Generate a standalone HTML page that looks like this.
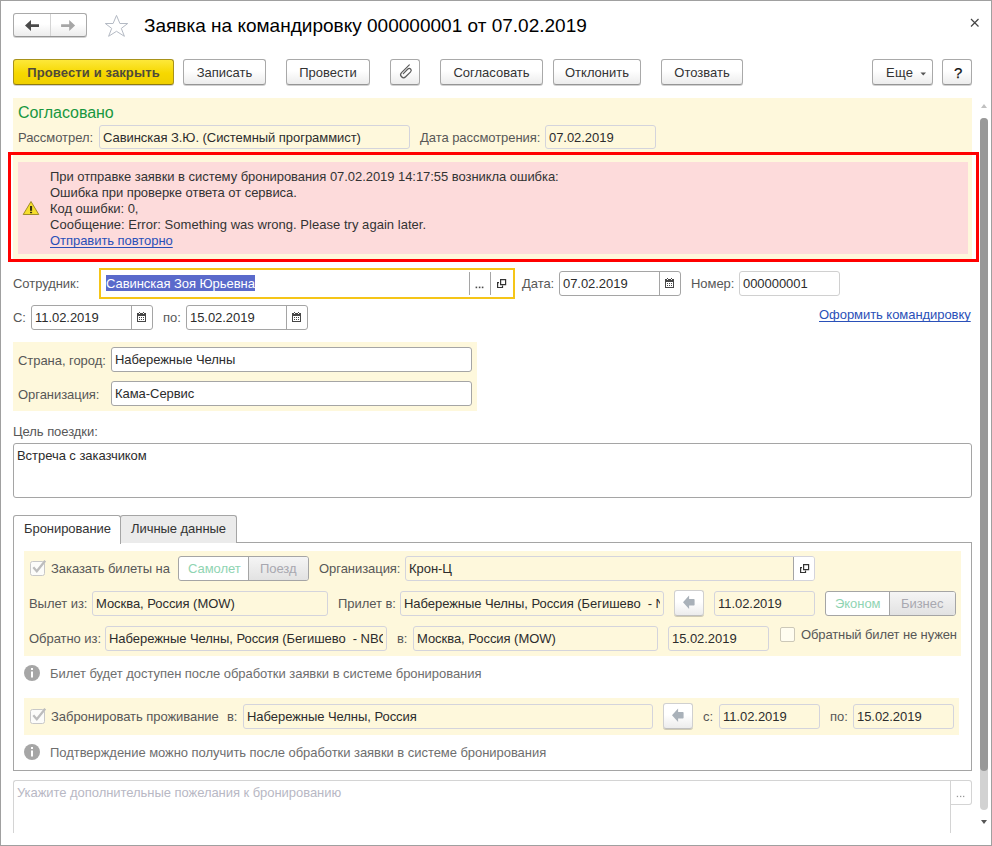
<!DOCTYPE html>
<html><head><meta charset="utf-8">
<style>
html,body{margin:0;padding:0;}
body{width:992px;height:846px;position:relative;overflow:hidden;background:#fff;font-family:"Liberation Sans",sans-serif;font-size:13px;color:#575757;}
.a{position:absolute;}
.t{position:absolute;white-space:nowrap;line-height:18px;font-size:13px;letter-spacing:-0.05px;}
.v{color:#303030;}
.btn{position:absolute;box-sizing:border-box;height:26px;border:1px solid #a9a9a9;border-bottom-color:#959595;border-radius:3px;background:linear-gradient(#ffffff 0%,#ffffff 45%,#ececec 100%);box-shadow:0 1px 0 rgba(0,0,0,0.18);color:#333;text-align:center;line-height:25px;font-size:13px;white-space:nowrap;}
.fld{position:absolute;box-sizing:border-box;border:1px solid #a5a5a5;border-radius:3px;background:#fff;overflow:hidden;}
.ro{border-color:#d4d4dc;background:#fef8dc;}
.lt{border-color:#d0d0d0;}
.yel{position:absolute;background:#fef8dc;}
.ft{position:absolute;left:3px;top:3px;line-height:18px;white-space:nowrap;color:#2c2c2c;letter-spacing:-0.05px;}
.sep{position:absolute;top:0;bottom:0;width:1px;background:#a5a5a5;}
</style></head><body>
<!-- window border -->
<div class="a" style="left:0;top:0;width:990px;height:844px;border:1px solid #a0a0a0;"></div>

<!-- nav buttons -->
<div class="btn" style="left:13px;top:13px;width:74px;height:24px;"></div>
<div class="a" style="left:50px;top:14px;width:1px;height:22px;background:#d4d4d4;"></div>
<svg class="a" style="left:24px;top:19px" width="16" height="14" viewBox="0 0 16 14"><path d="M1 6.5 L7 1.1 L7 5.2 L15 5.2 L15 7.9 L7 7.9 L7 12 Z" fill="#4a4a4a"/></svg>
<svg class="a" style="left:60px;top:19px" width="16" height="14" viewBox="0 0 16 14"><path d="M15.1 6.5 L9.2 1.1 L9.2 5.2 L1.1 5.2 L1.1 7.9 L9.2 7.9 L9.2 12 Z" fill="#a6a6a6"/></svg>
<!-- star -->
<svg class="a" style="left:104px;top:14px" width="26" height="24" viewBox="0 0 26 24"><path d="M12.5 1.4 L15.9 9.5 L23.7 9.5 L17.3 14.4 L20.4 22.3 L12.5 17.3 L4.6 22.3 L7.7 14.4 L1.3 9.5 L9.1 9.5 Z" fill="none" stroke="#b4bac4" stroke-width="1" stroke-linejoin="miter"/></svg>
<div class="t" style="left:144px;top:15px;font-size:19px;line-height:22px;color:#000;letter-spacing:0.01px;">Заявка на командировку 000000001 от 07.02.2019</div>
<!-- close -->
<svg class="a" style="left:970px;top:18px" width="10" height="10" viewBox="0 0 10 10"><path d="M1 1 L8.5 8.5 M8.5 1 L1 8.5" stroke="#444" stroke-width="1.2"/></svg>

<!-- toolbar -->
<div class="btn" style="left:13px;top:59px;width:161px;border-color:#a8921a;border-bottom-color:#8f7a10;background:linear-gradient(#fde83a,#f6d800 55%,#f0d000);color:#4f4a3a;font-weight:bold;letter-spacing:0.12px;">Провести и закрыть</div>
<div class="btn" style="left:183px;top:59px;width:83px;">Записать</div>
<div class="btn" style="left:286px;top:59px;width:84px;">Провести</div>
<div class="btn" style="left:390px;top:59px;width:30px;"></div>
<div class="btn" style="left:440px;top:59px;width:103px;">Согласовать</div>
<div class="btn" style="left:553px;top:59px;width:88px;">Отклонить</div>
<div class="btn" style="left:661px;top:59px;width:82px;">Отозвать</div>
<div class="btn" style="left:872px;top:59px;width:61px;"></div>
<div class="btn" style="left:942px;top:59px;width:30px;font-weight:bold;"></div>

<!-- approval block -->
<div class="yel" style="left:13px;top:98px;width:959px;height:161px;"></div>

<div class="t" style="left:18px;top:104px;font-size:16px;line-height:18px;color:#18973f;">Согласовано</div>
<div class="t" style="left:18px;top:129px;">Рассмотрел:</div>
<div class="fld ro" style="left:99px;top:125px;width:311px;height:24px;"><div class="ft" style="top:3px;">Савинская З.Ю. (Системный программист)</div></div>
<div class="t" style="left:420px;top:129px;">Дата рассмотрения:</div>
<div class="fld ro" style="left:545px;top:125px;width:111px;height:24px;"><div class="ft" style="top:3px;">07.02.2019</div></div>

<!-- error box -->
<div class="a" style="left:8px;top:152px;width:965px;height:104px;border:3px solid #ff0000;"></div>
<div class="a" style="left:13px;top:155px;width:959px;height:104px;background:#fef8dc;"></div>
<div class="a" style="left:18px;top:162px;width:950px;height:92px;background:#fddbdb;"></div>
<svg class="a" style="left:22px;top:200px" width="18" height="16" viewBox="0 0 18 16"><path d="M9 1.5 L16.8 14.5 L1.2 14.5 Z" fill="#f6df2c" stroke="#a08c28" stroke-width="1" stroke-linejoin="round"/><rect x="8" y="6" width="2.1" height="4.8" fill="#3a3212"/><rect x="8" y="11.8" width="2.1" height="1.4" fill="#3a3212"/></svg>
<div class="t v" style="left:50px;top:168px;color:#333;">При отправке заявки в систему бронирования 07.02.2019 14:17:55 возникла ошибка:</div>
<div class="t v" style="left:50px;top:184px;color:#333;">Ошибка при проверке ответа от сервиса.</div>
<div class="t v" style="left:50px;top:200px;color:#333;">Код ошибки: 0,</div>
<div class="t v" style="left:50px;top:216px;color:#333;letter-spacing:0.03px;">Сообщение: Error: Something was wrong. Please try again later.</div>
<div class="t" style="left:50px;top:232px;color:#2a50b8;text-decoration:underline;text-decoration-skip-ink:none;text-underline-offset:2px;">Отправить повторно</div>

<!-- employee row -->
<div class="t" style="left:13px;top:275px;">Сотрудник:</div>
<div class="a" style="left:99px;top:268px;width:412px;height:27px;border:2px solid #f5c518;background:#fff;"></div>
<div class="a" style="left:106px;top:275px;width:149px;height:16px;background:#5a6acb;"></div>
<div class="t" style="left:106px;top:275px;color:#fff;">Савинская Зоя Юрьевна</div>
<div class="a" style="left:469px;top:272px;width:1px;height:23px;background:#a5a5a5;"></div>
<div class="a" style="left:490px;top:272px;width:1px;height:23px;background:#a5a5a5;"></div>

<svg class="a" style="left:497px;top:279px" width="12" height="12" viewBox="0 0 12 12"><path d="M3.6 0.6 H8.6 V5.6 H3.6 Z" fill="none" stroke="#333" stroke-width="1.2"/><path d="M2 3.6 H0.6 V8.5 H5.5 V6.6" fill="none" stroke="#333" stroke-width="1.2"/></svg><svg class="a" style="left:474px;top:285px" width="12" height="4" viewBox="0 0 12 4"><rect x="1.6" y="1.6" width="1.6" height="1.6" fill="#4a4a4a"/><rect x="4.8" y="1.6" width="1.6" height="1.6" fill="#4a4a4a"/><rect x="7.8" y="1.6" width="1.6" height="1.6" fill="#4a4a4a"/></svg>
<div class="t" style="left:522px;top:275px;">Дата:</div>
<div class="fld" style="left:559px;top:271px;width:122px;height:25px;"><div class="ft" style="top:3px;">07.02.2019</div><div class="sep" style="left:99px;"></div></div>
<div class="t" style="left:691px;top:275px;">Номер:</div>
<div class="fld lt" style="left:739px;top:271px;width:101px;height:25px;"><div class="ft" style="top:3px;">000000001</div></div>

<div class="t" style="left:13px;top:309px;">С:</div>
<div class="fld" style="left:31px;top:305px;width:122px;height:25px;"><div class="ft" style="top:3px;">11.02.2019</div><div class="sep" style="left:99px;"></div></div>
<div class="t" style="left:163px;top:309px;">по:</div>
<div class="fld" style="left:186px;top:305px;width:122px;height:25px;"><div class="ft" style="top:3px;">15.02.2019</div><div class="sep" style="left:99px;"></div></div>
<div class="t" style="left:819px;top:306px;color:#2a50b8;text-decoration:underline;text-decoration-skip-ink:none;text-underline-offset:2px;">Оформить командировку</div>

<!-- country group -->
<div class="yel" style="left:13px;top:342px;width:464px;height:69px;"></div>
<div class="t" style="left:18px;top:352px;">Страна, город:</div>
<div class="fld" style="left:111px;top:347px;width:361px;height:25px;"><div class="ft" style="top:3px;">Набережные Челны</div></div>
<div class="t" style="left:18px;top:386px;">Организация:</div>
<div class="fld" style="left:111px;top:381px;width:361px;height:25px;"><div class="ft" style="top:3px;">Кама-Сервис</div></div>

<div class="t" style="left:13px;top:423px;">Цель поездки:</div>
<div class="fld" style="left:13px;top:443px;width:959px;height:55px;"><div class="ft" style="top:3px;">Встреча с заказчиком</div></div>

<!-- tabs -->
<div class="a" style="left:13px;top:542px;width:957px;height:227px;border:1px solid #a5a5a5;"></div>
<div class="a" style="left:120px;top:515px;width:115px;height:27px;border:1px solid #a5a5a5;border-bottom:none;border-radius:3px 3px 0 0;background:#ebebeb;"></div>
<div class="a" style="left:13px;top:515px;width:106px;height:28px;border:1px solid #a5a5a5;border-bottom:none;border-radius:3px 3px 0 0;background:#fff;"></div>
<div class="t" style="left:24px;top:520px;color:#333;">Бронирование</div>
<div class="t" style="left:131px;top:520px;color:#333;">Личные данные</div>

<!-- booking group -->
<div class="yel" style="left:24px;top:551px;width:937px;height:105px;"></div>

<svg class="a" style="left:30px;top:559px" width="17" height="17" viewBox="0 0 17 17"><rect x="0.5" y="2.5" width="14" height="14" rx="2" fill="#fcfcfa" stroke="#c8c8c8"/><path d="M3.3 8.3 L6.8 12.2 L15.2 1.8" fill="none" stroke="#bdbdbd" stroke-width="2.3"/></svg>
<div class="t" style="left:51px;top:560px;">Заказать билеты на</div>
<div class="a" style="left:178px;top:556px;width:131px;height:25px;box-sizing:border-box;border:1px solid #a5a5a5;border-radius:3px;background:linear-gradient(to right,#fff 0,#fff 70px,#e9e9e9 70px);"></div>
<div class="a" style="left:248px;top:557px;width:1px;height:23px;background:#a5a5a5;"></div>
<div class="a" style="left:249px;top:557px;width:59px;height:23px;background:linear-gradient(#f5f5f5,#e2e2e2);border-radius:0 2px 2px 0;"></div>
<div class="t" style="left:188px;top:560px;color:#8fd4b2;">Самолет</div>
<div class="t" style="left:260px;top:560px;color:#a8a8b0;">Поезд</div>
<div class="t" style="left:319px;top:560px;">Организация:</div>
<div class="fld ro" style="left:405px;top:556px;width:410px;height:25px;"><div class="ft" style="top:3px;">Крон-Ц</div><div class="a" style="left:387px;top:0;width:21px;height:23px;background:#fff;border-left:1px solid #a5a5a5;"></div></div>
<svg class="a" style="left:800px;top:564px" width="12" height="12" viewBox="0 0 12 12"><path d="M3.6 0.6 H8.6 V5.6 H3.6 Z" fill="none" stroke="#333" stroke-width="1.2"/><path d="M2 3.6 H0.6 V8.5 H5.5 V6.6" fill="none" stroke="#333" stroke-width="1.2"/></svg>

<div class="t" style="left:29px;top:595px;">Вылет из:</div>
<div class="fld ro" style="left:92px;top:591px;width:236px;height:25px;"><div class="ft" style="top:3px;">Москва, Россия (MOW)</div></div>
<div class="t" style="left:338px;top:595px;">Прилет в:</div>
<div class="fld ro" style="left:400px;top:591px;width:264px;height:25px;"><div class="ft" style="top:3px;right:3px;overflow:hidden;">Набережные Челны, Россия (Бегишево&nbsp; - NBC)</div></div>
<div class="btn" style="left:674px;top:590px;width:30px;border-color:#d0d0d0;border-bottom-color:#c0c0c0;"></div>
<svg class="a" style="left:674px;top:590px" width="30" height="26" viewBox="0 0 30 26"><path d="M9 12.2 L15.1 5.4 V9 H19.8 Q20.6 9 20.6 9.8 V14.7 Q20.6 15.5 19.8 15.5 H15.1 V19.1 Z" fill="#a9b1b9"/></svg>
<div class="fld ro" style="left:714px;top:591px;width:101px;height:25px;"><div class="ft" style="top:3px;">11.02.2019</div></div>
<div class="a" style="left:825px;top:591px;width:131px;height:25px;box-sizing:border-box;border:1px solid #a5a5a5;border-radius:3px;background:#fff;overflow:hidden;"><div class="a" style="left:63px;top:0;width:66px;height:23px;border-left:1px solid #a5a5a5;background:linear-gradient(#f5f5f5,#e2e2e2);"></div></div>
<div class="t" style="left:835px;top:595px;color:#8fd4b2;">Эконом</div>
<div class="t" style="left:901px;top:595px;color:#a8a8b0;">Бизнес</div>

<div class="t" style="left:29px;top:630px;">Обратно из:</div>
<div class="fld ro" style="left:105px;top:626px;width:282px;height:25px;"><div class="ft" style="top:3px;right:3px;overflow:hidden;">Набережные Челны, Россия (Бегишево&nbsp; - NBC)</div></div>
<div class="t" style="left:397px;top:630px;">в:</div>
<div class="fld ro" style="left:413px;top:626px;width:245px;height:25px;"><div class="ft" style="top:3px;">Москва, Россия (MOW)</div></div>
<div class="fld ro" style="left:668px;top:626px;width:101px;height:25px;"><div class="ft" style="top:3px;">15.02.2019</div></div>
<div class="a" style="left:780px;top:627px;width:15px;height:15px;box-sizing:border-box;border:1px solid #ccc8b8;border-radius:2px;background:#fffdf0;"></div>
<div class="t" style="left:801px;top:626px;letter-spacing:-0.12px;">Обратный билет не нужен</div>

<svg class="a" style="left:24px;top:665px" width="16" height="16" viewBox="0 0 16 16"><circle cx="8" cy="8" r="8" fill="#a6a6a6"/><rect x="7" y="3" width="2" height="2" fill="#fff"/><rect x="7" y="6.5" width="2" height="6" fill="#fff"/></svg>
<div class="t" style="left:50px;top:665px;color:#6e6e6e;">Билет будет доступен после обработки заявки в системе бронирования</div>

<div class="yel" style="left:24px;top:698px;width:935px;height:37px;"></div>
<svg class="a" style="left:30px;top:707px" width="17" height="17" viewBox="0 0 17 17"><rect x="0.5" y="2.5" width="14" height="14" rx="2" fill="#fcfcfa" stroke="#c8c8c8"/><path d="M3.3 8.3 L6.8 12.2 L15.2 1.8" fill="none" stroke="#bdbdbd" stroke-width="2.3"/></svg>
<div class="t" style="left:51px;top:708px;">Забронировать проживание</div>
<div class="t" style="left:227px;top:708px;">в:</div>
<div class="fld ro" style="left:243px;top:704px;width:410px;height:25px;"><div class="ft" style="top:3px;">Набережные Челны, Россия</div></div>
<div class="btn" style="left:663px;top:703px;width:30px;border-color:#d0d0d0;border-bottom-color:#c0c0c0;"></div>
<svg class="a" style="left:663px;top:703px" width="30" height="26" viewBox="0 0 30 26"><path d="M9 12.2 L15.1 5.4 V9 H19.8 Q20.6 9 20.6 9.8 V14.7 Q20.6 15.5 19.8 15.5 H15.1 V19.1 Z" fill="#a9b1b9"/></svg>
<div class="t" style="left:703px;top:708px;">с:</div>
<div class="fld ro" style="left:719px;top:704px;width:101px;height:25px;"><div class="ft" style="top:3px;">11.02.2019</div></div>
<div class="t" style="left:830px;top:708px;">по:</div>
<div class="fld ro" style="left:853px;top:704px;width:101px;height:25px;"><div class="ft" style="top:3px;">15.02.2019</div></div>

<svg class="a" style="left:24px;top:744px" width="16" height="16" viewBox="0 0 16 16"><circle cx="8" cy="8" r="8" fill="#a6a6a6"/><rect x="7" y="3" width="2" height="2" fill="#fff"/><rect x="7" y="6.5" width="2" height="6" fill="#fff"/></svg>
<div class="t" style="left:50px;top:744px;color:#6e6e6e;">Подтверждение можно получить после обработки заявки в системе бронирования</div>

<!-- bottom textarea (clipped) -->
<div class="a" style="left:13px;top:780px;width:959px;height:53px;overflow:hidden;">
  <div class="a" style="left:0;top:0;width:937px;height:60px;border:1px solid #d4d4d4;border-right:none;border-radius:3px 0 0 3px;"></div>
  <div class="a" style="left:937px;top:0;width:1px;height:53px;background:#d4d4d4;"></div>
  <div class="a" style="left:938px;top:0;width:20px;height:23px;border:1px solid #d4d4d4;border-left:none;border-radius:0 3px 3px 0;"></div>
  <div class="t" style="left:4px;top:4px;color:#b8b8c4;">Укажите дополнительные пожелания к бронированию</div>
  <svg class="a" style="left:942px;top:15px" width="12" height="3" viewBox="0 0 12 3"><rect x="1.8" y="0.8" width="1.3" height="1.3" fill="#999"/><rect x="5" y="0.8" width="1.3" height="1.3" fill="#999"/><rect x="8" y="0.8" width="1.3" height="1.3" fill="#999"/></svg>
</div>

<!-- scrollbar -->
<svg class="a" style="left:980px;top:103px" width="8" height="6" viewBox="0 0 8 6"><path d="M1 5 L4 1 L7 5 Z" fill="#c0c0c0"/></svg>
<div class="a" style="left:980px;top:118px;width:8px;height:692px;border-radius:4px;background:#d2d2d2;"></div>
<div class="a" style="left:980px;top:118px;width:8px;height:653px;border-radius:4px;background:#999;"></div>
<svg class="a" style="left:980px;top:819px" width="8" height="6" viewBox="0 0 8 6"><path d="M1 1 L7 1 L4 5 Z" fill="#555"/></svg>
<svg class="a" style="left:137px;top:312px" width="9" height="10" viewBox="0 0 9 10" shape-rendering="crispEdges"><rect x="0" y="1" width="9" height="9" fill="#474747"/><rect x="1" y="4" width="7" height="5" fill="#fff"/><rect x="2" y="0" width="1" height="1" fill="#474747"/><rect x="6" y="0" width="1" height="1" fill="#474747"/><rect x="2" y="1" width="1" height="1" fill="#fff"/><rect x="6" y="1" width="1" height="1" fill="#fff"/><rect x="2" y="5" width="1" height="1" fill="#474747"/><rect x="4" y="5" width="1" height="1" fill="#474747"/><rect x="6" y="5" width="1" height="1" fill="#474747"/><rect x="2" y="7" width="1" height="1" fill="#474747"/><rect x="4" y="7" width="1" height="1" fill="#474747"/><rect x="6" y="7" width="1" height="1" fill="#474747"/></svg><svg class="a" style="left:292px;top:312px" width="9" height="10" viewBox="0 0 9 10" shape-rendering="crispEdges"><rect x="0" y="1" width="9" height="9" fill="#474747"/><rect x="1" y="4" width="7" height="5" fill="#fff"/><rect x="2" y="0" width="1" height="1" fill="#474747"/><rect x="6" y="0" width="1" height="1" fill="#474747"/><rect x="2" y="1" width="1" height="1" fill="#fff"/><rect x="6" y="1" width="1" height="1" fill="#fff"/><rect x="2" y="5" width="1" height="1" fill="#474747"/><rect x="4" y="5" width="1" height="1" fill="#474747"/><rect x="6" y="5" width="1" height="1" fill="#474747"/><rect x="2" y="7" width="1" height="1" fill="#474747"/><rect x="4" y="7" width="1" height="1" fill="#474747"/><rect x="6" y="7" width="1" height="1" fill="#474747"/></svg><svg class="a" style="left:665px;top:278px" width="9" height="10" viewBox="0 0 9 10" shape-rendering="crispEdges"><rect x="0" y="1" width="9" height="9" fill="#474747"/><rect x="1" y="4" width="7" height="5" fill="#fff"/><rect x="2" y="0" width="1" height="1" fill="#474747"/><rect x="6" y="0" width="1" height="1" fill="#474747"/><rect x="2" y="1" width="1" height="1" fill="#fff"/><rect x="6" y="1" width="1" height="1" fill="#fff"/><rect x="2" y="5" width="1" height="1" fill="#474747"/><rect x="4" y="5" width="1" height="1" fill="#474747"/><rect x="6" y="5" width="1" height="1" fill="#474747"/><rect x="2" y="7" width="1" height="1" fill="#474747"/><rect x="4" y="7" width="1" height="1" fill="#474747"/><rect x="6" y="7" width="1" height="1" fill="#474747"/></svg>
<svg class="a" style="left:395px;top:62px" width="20" height="20" viewBox="0 0 20 20"><g transform="translate(11 10.3) rotate(45)"><path d="M-2.9 -7.6 V3.4 A2.9 2.9 0 0 0 2.9 3.4 V-3.6 A1.95 1.95 0 0 0 -1 -3.6 V2.8" fill="none" stroke="#5a5a5a" stroke-width="1.2" stroke-linecap="round"/></g></svg>
<div class="t" style="left:886px;top:64px;color:#333;letter-spacing:0.3px;">Еще</div>
<svg class="a" style="left:920px;top:72px" width="7" height="4" viewBox="0 0 7 4"><path d="M0.5 0.5 H6 L3.25 3.5 Z" fill="#555"/></svg>
<div class="t" style="left:954px;top:64px;color:#111;font-size:15px;line-height:18px;-webkit-text-stroke:0.25px #111;">?</div>
</body></html>
